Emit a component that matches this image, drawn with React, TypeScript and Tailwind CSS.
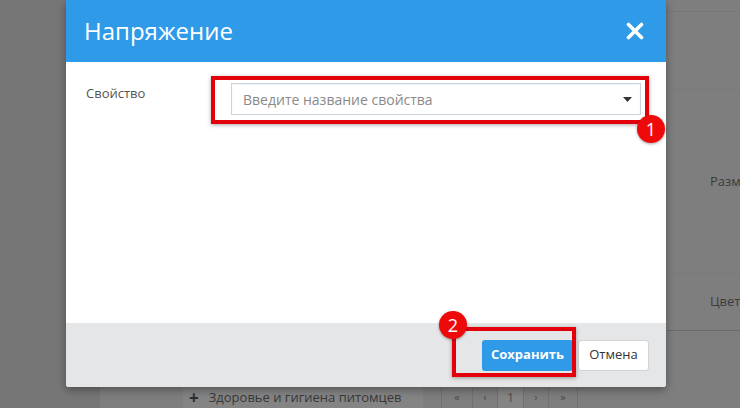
const font = { fontFamily: '"Open Sans", "Noto Sans", sans-serif' }

const pages = [
  { c: '«', w: 'w-[31px]' },
  { c: '‹', w: 'w-[25px]' },
  { c: '1', w: 'w-[26px] bg-[#858585] text-[13px]' },
  { c: '›', w: 'w-[25px]' },
  { c: '»', w: 'w-[30px] border-r' },
]

function Badge({ n, className }: { n: string; className: string }) {
  return (
    <div
      className={`absolute flex h-[28px] w-[28px] items-center justify-center rounded-full bg-[#ee0a0a] text-[18px] leading-none text-white shadow-[0_1px_3px_rgba(0,0,0,0.35)] ${className}`}
    >
      {n}
    </div>
  )
}

function Backdrop() {
  return (
    <div className="flex h-full w-full">
      <div className="w-[100px] bg-[#767676]" />
      <div className="flex flex-1 flex-col bg-[#7e7e7e]">
        <div className="flex flex-1">
          <div className="flex-1" />
          <div className="flex w-[73px] flex-col text-[13px] text-[#3c3c3c]">
            <div className="h-[12px] border-b border-[#787878]" />
            <div className="h-[78px] border-b border-[#7a7a7a]" />
            <div className="flex h-[184px] items-center border-b border-[#7a7a7a] pl-[43px]">Размер</div>
            <div className="flex h-[57px] items-center border-b border-[#6a6a6a] pl-[43px]">Цвет</div>
            <div className="flex-1" />
          </div>
        </div>
        <div className="flex h-[21px] items-stretch">
          <div className="w-[83px]" />
          <div className="flex w-[240px] items-center gap-[10px] bg-[#848484] pl-[6px] text-[13px] text-[#383838]">
            <span className="text-[17px] font-bold leading-none text-[#2e2e2e]">+</span>
            <span>Здоровье и гигиена питомцев</span>
          </div>
          <div className="w-[18px]" />
          <div className="flex text-[11px] text-[#4a4a4a]">
            {pages.map((p, i) => (
              <div key={i} className={`flex items-center justify-center border-l border-[#717171] ${p.w}`}>
                {p.c}
              </div>
            ))}
          </div>
        </div>
      </div>
    </div>
  )
}

export default function App() {
  return (
    <div className="relative h-[408px] w-[740px] overflow-hidden" style={font}>
      <Backdrop />

      <div className="absolute left-[66px] top-0 flex h-[387px] w-[600px] flex-col rounded-b-[3px] bg-white shadow-[0_3px_8px_rgba(0,0,0,0.35)]">
        <div className="flex h-[62px] items-center justify-between bg-[#2e9ae8] pl-[18px] pr-[22px]">
          <h2 className="text-[24px] text-white">Напряжение</h2>
          <svg width="18" height="18" viewBox="0 0 18 18">
            <path d="M2.5 2.5 L15.5 15.5 M15.5 2.5 L2.5 15.5" stroke="white" strokeWidth="3.6" strokeLinecap="round" />
          </svg>
        </div>

        <div className="flex flex-1 items-start pl-[20px] pt-[21px]">
          <div className="w-[145px] pt-[1px] text-[13px] text-[#555]">Свойство</div>
          <div className="flex h-[32px] w-[410px] items-center justify-between border border-[#c9d3dc] bg-white pl-[11px] pr-[8px] shadow-[inset_0_1px_2px_rgba(0,0,0,0.06)]">
            <span className="text-[14px] text-[#8a8a8a]">Введите название свойства</span>
            <svg width="9" height="5" viewBox="0 0 9 5">
              <path d="M0 0 H9 L4.5 5 Z" fill="#333" />
            </svg>
          </div>
        </div>

        <div className="flex h-[64px] items-center justify-end gap-[5px] rounded-b-[3px] bg-[#e5e6e7] pr-[17px]">
          <button className="h-[31px] w-[91px] rounded-[3px] bg-[#2e9ae8] text-[13px] font-bold text-white">
            Сохранить
          </button>
          <button className="h-[31px] w-[71px] rounded-[3px] border border-[#d2d2d2] bg-white text-[13px] text-[#333]">
            Отмена
          </button>
        </div>

        <div className="absolute left-[145px] top-[76px] h-[48px] w-[438px] border-[4px] border-[#e3000b] shadow-[0_1px_4px_rgba(0,0,0,0.35)]" />
        <Badge n="1" className="left-[571px] top-[115px]" />

        <div className="absolute left-[386px] top-[327px] h-[50px] w-[124px] border-[4px] border-[#e3000b] shadow-[0_1px_4px_rgba(0,0,0,0.35)]" />
        <Badge n="2" className="left-[373px] top-[311px]" />
      </div>
    </div>
  )
}
